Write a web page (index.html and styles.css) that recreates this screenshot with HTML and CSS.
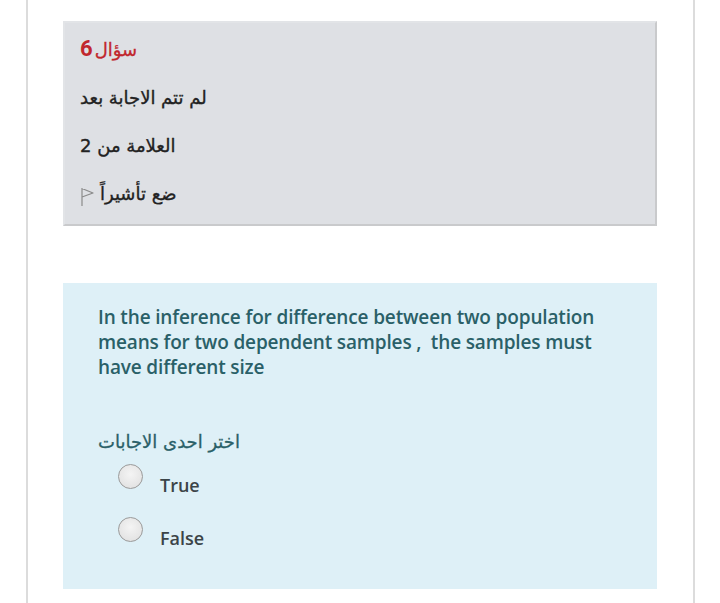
FILE: index.html
```html
<!DOCTYPE html>
<html lang="ar">
<head>
<meta charset="utf-8">
<link rel="stylesheet" href="styles.css">
</head>
<body>
<div class="page">
  <div class="info">
    <div class="qno"><span class="qlabel">سؤال</span><span class="qnum">6</span></div>
    <div class="row">لم تتم الاجابة بعد</div>
    <div class="row">العلامة من 2</div>
    <div class="row flagrow">ضع تأشيراً
      <svg class="flag" width="14" height="20" viewBox="0 0 14 20"><path d="M2 1 V19 M2 1.5 L13 6 L2 10" fill="none" stroke="#8a8a8a" stroke-width="1.2" stroke-linejoin="round"/></svg>
    </div>
  </div>
  <div class="content">
    <p class="qtext">In the inference for difference between two population means for two dependent samples ,&nbsp; the samples must have different size</p>
    <div class="prompt">اختر احدى الاجابات</div>
    <div class="answers">
      <label class="ans"><span class="radio"></span><span class="ltext">True</span></label>
      <label class="ans"><span class="radio"></span><span class="ltext">False</span></label>
    </div>
  </div>
</div>
</body>
</html>
```
FILE: styles.css
```css
html, body { margin: 0; padding: 0; background: #fff; }
body { width: 720px; height: 603px; overflow: hidden; }
.page {
  margin-left: 26px;
  width: 669px;
  height: 603px;
  border-left: 2px solid #dcdcdc;
  border-right: 2px solid #dcdcdc;
  padding: 21px 36px 0 35px;
  box-sizing: border-box;
}
.info {
  background: #dee0e4;
  border: 2px solid #c9cacc;
  border-top-color: #e2e4e7;
  border-left-color: #e2e4e7;
  height: 205px;
  box-sizing: border-box;
  padding: 13px 0 0 15px;
  font-family: "DejaVu Sans", sans-serif;
  color: #222;
  -webkit-text-stroke: 0.35px #222;
}
.qno { direction: ltr; display: flex; align-items: baseline; height: 38px; color: #c1272d; font-size: 18px; -webkit-text-stroke: 0.3px #c1272d; }
.qnum { font-family: "Roboto", "DejaVu Sans", sans-serif; font-weight: 700; font-size: 22px; order: -1; margin-right: 2px; -webkit-text-stroke: 0; }
.row { font-size: 18px; height: 48px; line-height: 48px; }
.flagrow { display: flex; align-items: center; gap: 6px; flex-direction: row-reverse; justify-content: flex-end; }
.flag { margin-top: 6px; }
.content {
  margin-top: 57px;
  background: #def0f7;
  height: 306px;
  box-sizing: border-box;
  padding: 22px 40px 0 35px;
}
.qtext {
  margin: 0;
  font-family: "Open Sans", sans-serif;
  font-weight: 600;
  font-size: 19px;
  line-height: 25px;
  color: #2a6068;
  letter-spacing: -0.15px;
}
.prompt {
  margin-top: 51px;
  font-family: "DejaVu Sans", sans-serif;
  font-size: 18px;
  color: #2a6068;
  -webkit-text-stroke: 0.3px #2a6068;
  text-align: left;
}
.answers { margin-top: 12px; padding-left: 20px; display: flex; flex-direction: column; gap: 29px; }
.ans { display: flex; align-items: center; gap: 17px; height: 24px; }
.radio {
  width: 25px; height: 25px; border-radius: 50%;
  box-sizing: border-box;
  border: 1px solid #9a9a9a;
  background: radial-gradient(circle at 50% 40%, #f4f4f4, #dedede);
}
.ltext {
  font-family: "Open Sans", sans-serif;
  font-weight: 600;
  font-size: 18px;
  color: #3b4448;
  margin-top: 18px;
}
```
